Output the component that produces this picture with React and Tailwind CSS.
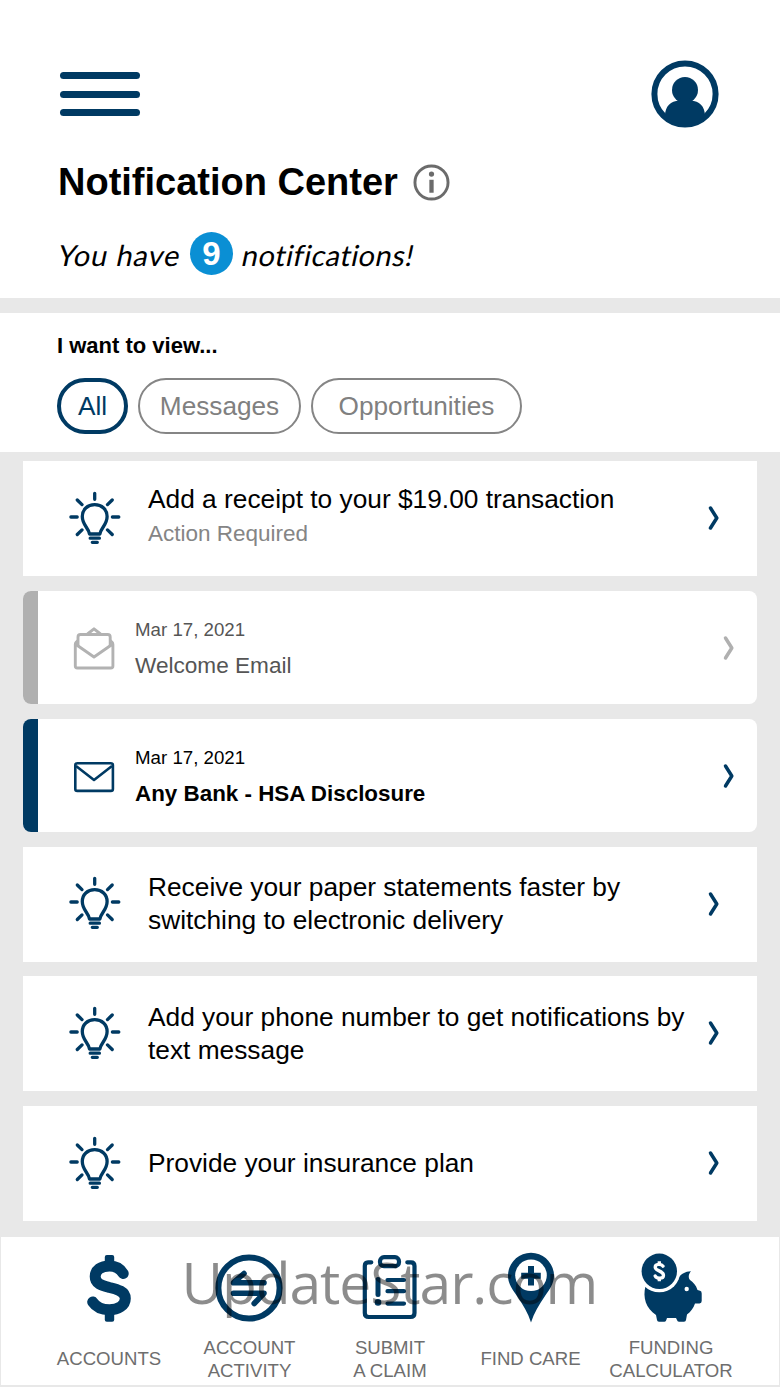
import React, { useState } from "react";

const filters = [
  { name: "All", width: "w-[71px]" },
  { name: "Messages", width: "w-[163px]" },
  { name: "Opportunities", width: "w-[211px]" },
];

const notifications = [
  { id: 1, type: "tip", title: "Add a receipt to your $19.00 transaction", note: "Action Required" },
  { id: 2, type: "message", title: "Welcome Email", date: "Mar 17, 2021", read: true },
  { id: 3, type: "message", title: "Any Bank - HSA Disclosure", date: "Mar 17, 2021", read: false },
  { id: 4, type: "tip", title: "Receive your paper statements faster by switching to electronic delivery" },
  { id: 5, type: "tip", title: "Add your phone number to get notifications by text message" },
  { id: 6, type: "tip", title: "Provide your insurance plan" },
];

const UserIcon = () => (
  <svg width="68" height="68" viewBox="0 0 68 68" className="text-[#003a63]">
    <circle cx="34" cy="34" r="30.6" fill="none" stroke="currentColor" strokeWidth="6" />
    <circle cx="34" cy="30" r="13" fill="currentColor" />
    <path d="M14 56 C14 46 20 41 28 40.500 L30 38 H38 L40 40.500 C48 41 54 46 54 56 C43 66 25 66 14 56 Z" fill="currentColor" />
  </svg>
);

const InfoIcon = () => (
  <svg width="37" height="37" viewBox="0 0 38 38" className="text-[#6b6b6b]">
    <circle cx="19" cy="19" r="17" fill="none" stroke="currentColor" strokeWidth="3" />
    <circle cx="19" cy="10.300" r="2.700" fill="currentColor" />
    <rect x="16.800" y="16.200" width="4.400" height="13.300" fill="currentColor" />
  </svg>
);

const BulbIcon = () => (
  <svg width="52" height="54" viewBox="0 0 52 54" fill="none" stroke="#003a63" strokeWidth="3.300" strokeLinecap="round" strokeLinejoin="round" className="mb-0.5">
    <path d="M20.500 43 C19.500 36.500 13.300 34 13.300 25.500 C13.300 18.500 18.500 13.700 25.700 13.700 C32.900 13.700 38.100 18.500 38.100 25.500 C38.100 34 31.900 36.500 30.900 43 Z" />
    <path d="M21.200 47.200 H30.400 M23.300 51.300 H28.300" />
    <path d="M25.700 2.300 V8.300 M1.900 26 H8.200 M43.400 26 H49.800 M8.300 9 L13 13.600 M43.200 9 L38.500 13.600 M8.300 43.500 L13 38.900 M43.200 43.500 L38.500 38.900" />
  </svg>
);

const MailIcon = () => (
  <svg width="42" height="44" viewBox="0 0 42 44" fill="none" stroke="#003a63" strokeWidth="2.600" strokeLinejoin="round" className="mt-0.5">
    <rect x="2.300" y="8.300" width="37.600" height="27.600" rx="2" />
    <path d="M3 11 L21 25 L39 11" />
  </svg>
);

const OpenMailIcon = () => (
  <svg width="42" height="44" viewBox="0 0 42 44" fill="none" stroke="#b2b2b2" strokeWidth="2.900" strokeLinejoin="round" className="mt-0.5">
    <path d="M5 13.500 L3.300 15 Q2.300 16 2.300 17.500 V39 Q2.300 41 4.300 41 H37.900 Q39.900 41 39.900 39 V17.500 Q39.900 16 38.900 15 L37.200 13.500" />
    <path d="M5 19.500 V10 Q5 7.500 7.500 7.500 H34.700 Q37.200 7.500 37.200 10 V19.500" />
    <path d="M14.500 7 L21 1.800 L27.500 7" />
    <path d="M3 17.500 L21 30 L39 17.500" />
  </svg>
);

const Chevron = ({ color }) => (
  <svg width="12" height="26" viewBox="0 0 12 26" fill="none" stroke={color} strokeWidth="3.500" strokeLinecap="round" strokeLinejoin="round">
    <path d="M2.500 3 L8.800 13 L2.500 23" />
  </svg>
);

const DollarIcon = () => (
  <svg width="49" height="72" viewBox="0 0 49 72" fill="#003a63">
    <path d="M38.200 21.500 C35 16 30 14 24.500 14 C16 14 10.200 18 10.200 24.500 C10.200 32 17 33.500 24.500 35.500 C33 37.500 40.300 39.500 40.300 46.500 C40.300 53.500 33 57.700 24.500 57.700 C17 57.700 11 55 7.700 50" fill="none" stroke="#003a63" strokeWidth="11" strokeLinecap="round" />
    <rect x="19.800" y="3" width="9.400" height="14" rx="2" />
    <rect x="19.800" y="56" width="9.400" height="13.700" rx="2" />
  </svg>
);

const TransferIcon = () => (
  <svg width="72" height="72" viewBox="0 0 72 72" fill="none" stroke="#003a63" strokeLinecap="round" strokeLinejoin="round" className="mr-0.5">
    <circle cx="36" cy="36" r="30.600" strokeWidth="6" />
    <path d="M51 30.700 H20.500 L31 21.500" strokeWidth="5.600" />
    <path d="M20.500 41.300 H51 L41.200 51.500" strokeWidth="5.600" />
  </svg>
);

const ClipboardIcon = () => (
  <svg width="60" height="72" viewBox="0 0 60 72" fill="none" stroke="#003a63" strokeWidth="4.200" strokeLinecap="round">
    <path d="M11.300 10.300 H8 Q4.800 10.300 4.800 14 V61 Q4.800 65 8.800 65 H50.500 Q54.500 65 54.500 61 V14 Q54.500 10.300 51 10.300 H47.300" />
    <rect x="20" y="5.200" width="19" height="9" rx="4" />
    <path d="M27.500 28 H44 M27.500 39.200 H44 M27.500 51.600 H44" />
    <path d="M18 27.500 V42.500" strokeWidth="5" />
    <circle cx="18" cy="50.400" r="3.300" fill="#003a63" stroke="none" />
  </svg>
);

const PinIcon = () => (
  <svg width="50" height="72" viewBox="0 0 50 72" fill="#003a63">
    <path d="M25 .7 C12.300 .7 2 11 2 23.700 C2 32 7 38 11 44 C17 53 22 61 25 70.500 C28 61 33 53 39 44 C43 38 48 32 48 23.700 C48 11 37.700 .7 25 .7 Z" />
    <circle cx="25" cy="23.300" r="15.800" fill="#fff" />
    <path d="M22 14 H28 V20.800 H34.800 V26.800 H28 V33.500 H22 V26.800 H15.200 V20.800 H22 Z" />
  </svg>
);

const PiggyIcon = () => (
  <svg width="62" height="72" viewBox="0 0 62 72" fill="#003a63" className="ml-0.5">
    <path d="M4.500 34 C1.500 46 5 56 15 63 L16 68 Q16.200 69.700 18 69.700 H23.500 Q25 69.700 25.300 68 L26 66 H35 L36 68 Q36.300 69.700 38 69.700 H43 Q44.800 69.700 45 68 L46 62.500 C50 59.500 52.500 56 54 51.500 H58.500 Q60.700 51 60.700 49 V41.500 Q60.700 39 59 38.700 L56.500 38 C55 33 52 30 49 28 C47 25.500 47.500 22 50 19.300 C44 19.300 40 22.500 38 25 Z" />
    <circle cx="18.300" cy="19.300" r="21" fill="#fff" />
    <circle cx="18.300" cy="19.300" r="17.700" />
    <circle cx="45.700" cy="37" r="2.200" fill="#fff" />
    <path d="M22 14.200 C20.500 11.700 14.200 11.500 14.200 15.200 C14.200 19.300 22.500 18.500 22.500 23.200 C22.500 27.200 15.700 27 14.200 24" fill="none" stroke="#fff" strokeWidth="3.300" strokeLinecap="round" />
    <path d="M18.300 9.300 V13 M18.300 26 V29.300" stroke="#fff" strokeWidth="3.300" />
  </svg>
);

const tabs = [
  { lines: ["ACCOUNTS"], Icon: DollarIcon },
  { lines: ["ACCOUNT", "ACTIVITY"], Icon: TransferIcon },
  { lines: ["SUBMIT", "A CLAIM"], Icon: ClipboardIcon },
  { lines: ["FIND CARE"], Icon: PinIcon },
  { lines: ["FUNDING", "CALCULATOR"], Icon: PiggyIcon },
];

const TipCard = ({ item }) => (
  <div className="flex h-[115px] items-center bg-white pl-[46px] pr-[37px]">
    <BulbIcon />
    <div className="ml-[27px] flex-1">
      <p className="w-[550px] text-[26.3px] leading-[33px] text-black">{item.title}</p>
      {item.note && <p className="mb-0.5 text-[22.5px] leading-[36px] text-[#858585]">{item.note}</p>}
    </div>
    <div className="mb-px">
      <Chevron color="#003a63" />
    </div>
  </div>
);

const MessageCard = ({ item }) => (
  <div className="flex h-[113px] overflow-hidden rounded-lg bg-white">
    <div className={item.read ? "w-[15px] bg-[#b0b0b0]" : "w-[15px] bg-[#003a63]"}></div>
    <div className="flex flex-1 items-center pl-[35px] pr-[22px] pt-px">
      {item.read ? <OpenMailIcon /> : <MailIcon />}
      <div className={item.read ? "ml-[20px] flex-1 pt-px text-[#555555]" : "ml-[20px] flex-1 pt-px text-black"}>
        <p className="text-[18.7px] leading-9">{item.date}</p>
        <p className={item.read ? "text-[22.6px] leading-9" : "text-[22.4px] font-bold leading-9"}>{item.title}</p>
      </div>
      <Chevron color={item.read ? "#b0b0b0" : "#003a63"} />
    </div>
  </div>
);

const App = () => {
  const [active, setActive] = useState("All");

  const visible = notifications.filter((item) => {
    if (active === "Messages") return item.type === "message";
    if (active === "Opportunities") return item.type === "tip";
    return true;
  });

  return (
    <div className="flex h-[1387px] w-[780px] flex-col overflow-hidden bg-[#e8e8e8] font-['Liberation_Sans',Arial,sans-serif]">
      {/* Header */}
      <header className="h-[298px] bg-white pl-[58px] pr-[61px] pt-[60px]">
        <div className="flex items-start justify-between">
          <button className="ml-[1.5px] mt-3 flex w-20 flex-col gap-[11.5px]">
            <span className="h-[7px] w-full rounded-full bg-[#003a63]"></span>
            <span className="h-[7px] w-full rounded-full bg-[#003a63]"></span>
            <span className="h-[7px] w-full rounded-full bg-[#003a63]"></span>
          </button>
          <UserIcon />
        </div>
        <div className="mt-[32px] flex items-center gap-[15px]">
          <h1 className="text-[38px] font-bold leading-[44px] text-black">Notification Center</h1>
          <InfoIcon />
        </div>
        <p className="mt-[30px] flex h-[39px] items-center font-['Lato',sans-serif] text-[29px] leading-[39px] text-black">
          <span className="w-[132px] -skew-x-12 pl-px pt-0.5 tracking-[0.9px]">You have</span>
          <span className="flex h-[43px] w-[43px] items-center justify-center rounded-full bg-[#0a8fd4] pb-px font-['Liberation_Sans',Arial,sans-serif] text-[33px] font-bold text-white">9</span>
          <span className="ml-[10px] -skew-x-12 pt-0.5 tracking-[0.45px]">notifications!</span>
        </p>
      </header>

      {/* Filters */}
      <section className="mt-[15px] h-[139px] bg-white pl-[57px] pt-5">
        <h2 className="text-[22px] font-bold leading-[26px] text-black">I want to view...</h2>
        <div className="mt-[19px] flex gap-[10px]">
          {filters.map((f) => (
            <button
              key={f.name}
              onClick={() => setActive(f.name)}
              className={`${f.width} h-14 rounded-[28px] pt-0.5 text-[26.2px] ${
                active === f.name ? "border-4 border-[#003a63] text-[#003a63]" : "border-2 border-[#858585] text-[#808080]"
              }`}
            >
              {f.name}
            </button>
          ))}
        </div>
      </section>

      {/* Notification list */}
      <main className="flex flex-1 flex-col gap-[14.85px] pl-[23px] pr-[23px] pt-[9px]">
        {visible.map((item) =>
          item.type === "tip" ? <TipCard key={item.id} item={item} /> : <MessageCard key={item.id} item={item} />
        )}
      </main>

      {/* Bottom navigation */}
      <nav className="relative mx-px mb-0.5 grid h-[148px] grid-cols-[repeat(5,140.5px)] justify-center bg-white pt-[15px]">
        {tabs.map(({ lines, Icon }) => (
          <div key={lines[0]} className="flex flex-col items-center">
            <Icon />
            <div className="mt-[13px] flex h-[45px] flex-col justify-center text-center text-[18.6px] leading-[22.5px] text-[#6e6e6e]">
              {lines.map((line) => (
                <span key={line}>{line}</span>
              ))}
            </div>
          </div>
        ))}
        <span className="absolute left-[180.5px] top-[3px] whitespace-nowrap font-['Open_Sans',sans-serif] text-[57px] leading-[84px] tracking-[-1.1px] text-black/45">
          UpdateStar.com
        </span>
      </nav>
    </div>
  );
};

export default App;
